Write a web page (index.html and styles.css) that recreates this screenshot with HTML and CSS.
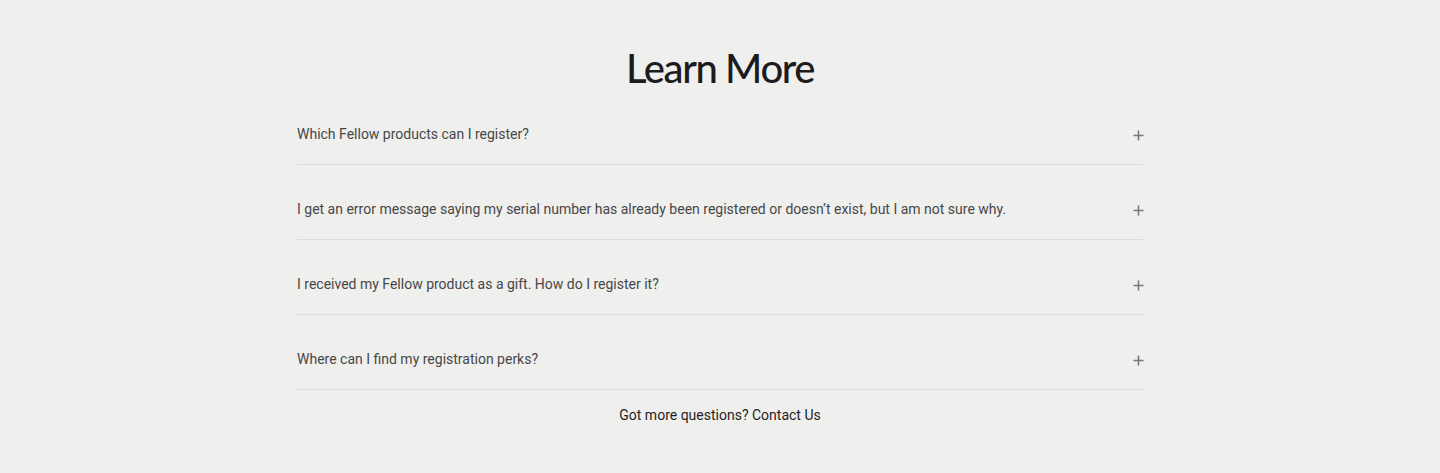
FILE: index.html
```html
<!DOCTYPE html>
<html lang="en">
<head>
    <meta charset="UTF-8">
    <meta name="viewport" content="width=device-width, initial-scale=1.0">
    <title>Learn More</title>
    <link rel="stylesheet" href="styles.css">
</head>
<body>
    <div class="faq">
        <h2 class="faq-title">Learn More</h2>

        <div class="faq-list">
            <div class="faq-item">
                <span class="faq-question">Which Fellow products can I register?</span>
                <svg class="faq-icon" width="11" height="11" viewBox="0 0 11 11"><path d="M5.5 0.5v10M0.5 5.5h10"/></svg>
            </div>
            <div class="faq-item">
                <span class="faq-question">I get an error message saying my serial number has already been registered or doesn’t exist, but I am not sure why.</span>
                <svg class="faq-icon" width="11" height="11" viewBox="0 0 11 11"><path d="M5.5 0.5v10M0.5 5.5h10"/></svg>
            </div>
            <div class="faq-item">
                <span class="faq-question">I received my Fellow product as a gift. How do I register it?</span>
                <svg class="faq-icon" width="11" height="11" viewBox="0 0 11 11"><path d="M5.5 0.5v10M0.5 5.5h10"/></svg>
            </div>
            <div class="faq-item">
                <span class="faq-question">Where can I find my registration perks?</span>
                <svg class="faq-icon" width="11" height="11" viewBox="0 0 11 11"><path d="M5.5 0.5v10M0.5 5.5h10"/></svg>
            </div>
        </div>

        <p class="faq-footer">Got more questions? <a href="#">Contact Us</a></p>
    </div>
</body>
</html>
```

FILE: styles.css
```css
* {
    margin: 0;
    padding: 0;
    box-sizing: border-box;
}

body {
    background-color: #efefee;
    font-family: Roboto, "Liberation Sans", sans-serif;
}

.faq {
    width: 846px;
    margin: 0 auto;
    padding-top: 46px;
}

.faq-title {
    font-family: Lato, "Liberation Sans", sans-serif;
    font-weight: 500;
    font-size: 40px;
    line-height: 44px;
    color: #1c1c1c;
    text-align: center;
    letter-spacing: -1.4px;
}

.faq-item {
    display: flex;
    align-items: center;
    justify-content: space-between;
    padding: 34px 0 20px;
    border-bottom: 1px solid #dcdcdb;
}

.faq-question {
    font-size: 14px;
    line-height: 20px;
    color: #474747;
}

.faq-icon {
    stroke: #7a7a7a;
    stroke-width: 1.6;
    margin-top: 3px;
    margin-right: -1px;
}

.faq-footer {
    text-align: center;
    font-size: 14px;
    line-height: 20px;
    color: #1f1f1f;
    padding-top: 15px;
}

.faq-footer a {
    color: inherit;
    text-decoration: none;
}
```
